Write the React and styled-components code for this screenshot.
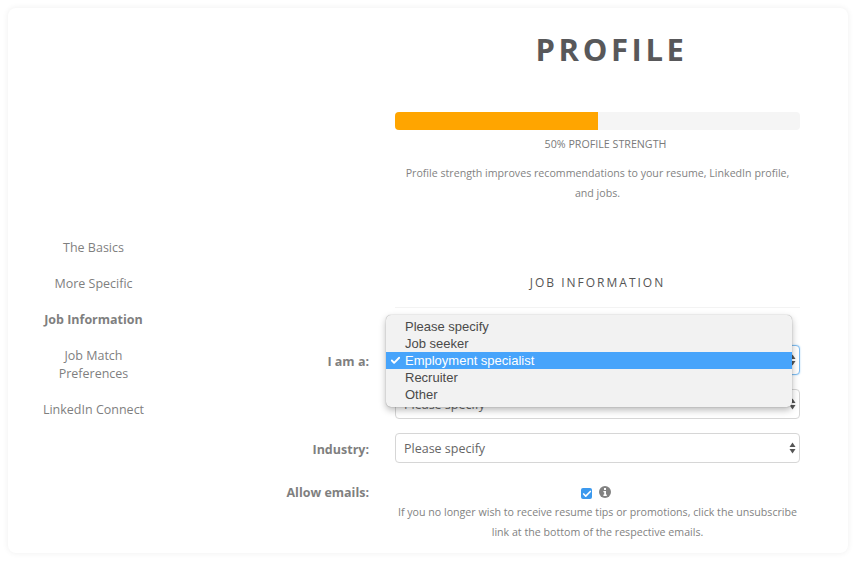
import React from 'react'
import styled, { createGlobalStyle } from 'styled-components'
import { Check } from 'lucide-react'

const GlobalStyle = createGlobalStyle`
  html, body {
    margin: 0;
    height: 100%;
    background: #fff;
    font-family: "Open Sans", "Liberation Sans", sans-serif;
    overflow: hidden;
  }
`

const Page = styled.div`
  width: 856px;
  height: 561px;
  box-sizing: border-box;
  padding: 8px;
`

const Card = styled.div`
  height: 545px;
  background: #fff;
  border-radius: 8px;
  box-shadow: 0 0 6px rgba(0, 0, 0, 0.07);
  display: flex;
  overflow: hidden;
`

const Side = styled.nav`
  width: 171px;
  padding-top: 231px;
  display: flex;
  flex-direction: column;
  gap: 18px;
  align-items: center;
`

const SideLink = styled.a`
  width: 120px;
  text-align: center;
  font-size: 12.5px;
  line-height: 18px;
  color: #7f7f7f;
  font-weight: ${p => (p.$active ? 700 : 400)};
`

const Main = styled.main`
  flex: 1;
  display: flex;
  flex-direction: column;
`

const Title = styled.h1`
  margin: 19px 0 0 230px;
  width: 405px;
  text-align: center;
  font-size: 31px;
  line-height: 44px;
  letter-spacing: 3.6px;
  font-weight: 700;
  color: #58585a;
`

const Right = styled.div`
  margin-left: 216px;
  width: 405px;
`

const Track = styled.div`
  margin-top: 41px;
  height: 18px;
  background: #f5f5f5;
  border-radius: 4px;
  overflow: hidden;
`

const Fill = styled.div`
  height: 100%;
  background: #ffa500;
`

const Strength = styled.div`
  margin-top: 4px;
  padding-left: 16px;
  text-align: center;
  font-size: 10.7px;
  line-height: 20px;
  color: #7a7a7a;
`

const Hint = styled.p`
  margin: 9px 0 0;
  text-align: center;
  font-size: 10.65px;
  line-height: 20px;
  color: #828282;
`

const Section = styled.h2`
  margin: 71px 0 0;
  padding-bottom: 15px;
  border-bottom: 1px solid #f3f3f3;
  text-align: center;
  font-size: 12px;
  line-height: 18px;
  font-weight: 400;
  letter-spacing: 2px;
  color: #555;
`

const Form = styled.div`
  position: relative;
  margin-top: 37px;
  display: flex;
  flex-direction: column;
  gap: 14px;
`

const Row = styled.div`
  display: flex;
  align-items: center;
  gap: 26px;
`

const Label = styled.label`
  width: 190px;
  padding-top: 2px;
  text-align: right;
  font-size: 12.5px;
  font-weight: 700;
  color: #7f7f7f;
`

const Select = styled.div`
  width: 405px;
  height: 30px;
  box-sizing: border-box;
  padding: 0 3px 0 8px;
  display: flex;
  align-items: center;
  justify-content: space-between;
  background: #fff;
  border: 1px solid ${p => (p.$focus ? '#7fbcf0' : '#d6d6d6')};
  box-shadow: ${p => (p.$focus ? '0 0 2px #a8d3f5' : 'none')};
  border-radius: 4px;
  font-size: 12.5px;
  color: #666;
`

const Arrows = () => (
  <svg width="7" height="12" viewBox="0 0 7 12" fill="#555">
    <path d="M3.5 0.5 L6.5 5 H0.5 Z" />
    <path d="M3.5 11.5 L6.5 7 H0.5 Z" />
  </svg>
)

const Menu = styled.ul`
  position: absolute;
  left: 207px;
  top: -30px;
  width: 406px;
  margin: 0;
  padding: 3px 0 4px;
  list-style: none;
  background: #f2f2f2;
  border-radius: 5px;
  box-shadow: 0 0 1px rgba(0, 0, 0, 0.45), 0 3px 7px rgba(0, 0, 0, 0.28);
  font-family: "Liberation Sans", Arial, sans-serif;
  font-size: 13px;
`

const Option = styled.li`
  position: relative;
  height: 17px;
  line-height: 17px;
  padding-left: 19px;
  color: ${p => (p.$selected ? '#fff' : '#4a4a4a')};
  background: ${p => (p.$selected ? '#47a4fb' : 'transparent')};
`

const Tick = styled(Check)`
  position: absolute;
  left: 4px;
  top: 3px;
`

const Allow = styled(Row)`
  align-items: flex-start;
  margin-top: 6px;
`

const AllowLabel = styled(Label)`
  padding-top: 1px;
  line-height: 18px;
`

const AllowBody = styled.div`
  width: 405px;
  text-align: center;
`

const Checks = styled.div`
  display: flex;
  justify-content: center;
  align-items: flex-start;
  gap: 7px;
  height: 16px;
  padding-top: 3px;
  margin-left: -3px;
`

const Box = styled.span`
  width: 11px;
  height: 11px;
  margin-top: 2px;
  border-radius: 2px;
  background: #3c99ee;
  display: flex;
  align-items: center;
  justify-content: center;
`

const Info = () => (
  <svg width="12" height="12" viewBox="0 0 12 12">
    <circle cx="6" cy="6" r="6" fill="#828282" />
    <rect x="5" y="2" width="2" height="2" fill="#fff" />
    <path d="M4.4 5 H7 V8.6 H7.8 V10 H4.4 V8.6 H5.2 V6.3 H4.4 Z" fill="#fff" />
  </svg>
)

const Note = styled.p`
  margin: 0;
  font-size: 10.65px;
  line-height: 20px;
  color: #828282;
`

const nav = [
  { text: 'The Basics' },
  { text: 'More Specific' },
  { text: 'Job Information', active: true },
  { text: 'Job Match Preferences' },
  { text: 'LinkedIn Connect' },
]

const options = ['Please specify', 'Job seeker', 'Employment specialist', 'Recruiter', 'Other']

export default function App() {
  return (
    <Page>
      <GlobalStyle />
      <Card>
        <Side>
          {nav.map(n => (
            <SideLink key={n.text} $active={n.active}>{n.text}</SideLink>
          ))}
        </Side>
        <Main>
          <Title>PROFILE</Title>
          <Right>
            <Track>
              <Fill style={{ width: '50%' }} />
            </Track>
            <Strength>50% PROFILE STRENGTH</Strength>
            <Hint>Profile strength improves recommendations to your resume, LinkedIn profile, and jobs.</Hint>
            <Section>JOB INFORMATION</Section>
          </Right>
          <Form>
            <Row>
              <Label>I am a:</Label>
              <Select $focus>Employment specialist<Arrows /></Select>
            </Row>
            <Row>
              <Label />
              <Select>Please specify<Arrows /></Select>
            </Row>
            <Row>
              <Label>Industry:</Label>
              <Select>Please specify<Arrows /></Select>
            </Row>
            <Allow>
              <AllowLabel>Allow emails:</AllowLabel>
              <AllowBody>
                <Checks>
                  <Box><Check size={10} color="#fff" strokeWidth={4} /></Box>
                  <Info />
                </Checks>
                <Note>If you no longer wish to receive resume tips or promotions, click the unsubscribe link at the bottom of the respective emails.</Note>
              </AllowBody>
            </Allow>
            <Menu>
              {options.map(o => (
                <Option key={o} $selected={o === 'Employment specialist'}>
                  {o === 'Employment specialist' && <Tick size={11} color="#fff" strokeWidth={4} />}
                  {o}
                </Option>
              ))}
            </Menu>
          </Form>
        </Main>
      </Card>
    </Page>
  )
}
